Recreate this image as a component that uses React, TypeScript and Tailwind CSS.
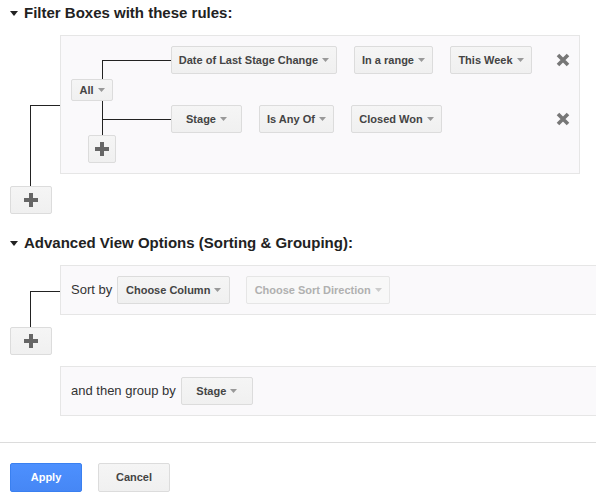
import React from "react";

const FONT = { fontFamily: '"Liberation Sans", Arial, Helvetica, sans-serif' };

function Caret({ color = "#999" }: { color?: string }) {
  return (
    <svg width="7" height="4" viewBox="0 0 7 4" className="shrink-0">
      <path d="M0 0h7L3.5 4z" fill={color} />
    </svg>
  );
}

function Btn({
  className = "",
  children,
  caret = true,
  disabled = false,
}: {
  className?: string;
  children?: React.ReactNode;
  caret?: boolean;
  disabled?: boolean;
}) {
  return (
    <div
      className={
        "flex shrink-0 items-center justify-center gap-[4px] rounded-[2px] border text-[11px] font-bold " +
        (disabled
          ? "border-[#e6e6e6] bg-[#f8f8f8] text-[#b0b0b0] "
          : "border-[#dcdcdc] bg-gradient-to-b from-[#f5f5f5] to-[#f0f0f0] text-[#444] ") +
        className
      }
    >
      {children}
      {caret && <Caret color={disabled ? "#ccc" : "#999"} />}
    </div>
  );
}

function PlusIcon() {
  return (
    <svg width="14" height="14" viewBox="0 0 14 14">
      <path d="M5 0h4v5h5v4H9v5H5V9H0V5h5z" fill="#666" />
    </svg>
  );
}

function XIcon() {
  return (
    <svg width="14" height="14" viewBox="0 0 14 14">
      <path d="M2 2L12 12M12 2L2 12" stroke="#777" strokeWidth="3.6" strokeLinecap="butt" />
    </svg>
  );
}

function Heading({ children }: { children: React.ReactNode }) {
  return (
    <div className="flex h-[20px] items-center pl-[10px] text-[15px] font-bold leading-[20px] text-[#222]">
      <svg width="8" height="5" viewBox="0 0 8 5" className="mr-[6px] mt-[1px]">
        <path d="M0 0h8L4 5z" fill="#222" />
      </svg>
      <span>{children}</span>
    </div>
  );
}

export default function App() {
  return (
    <div className="h-[502px] w-[596px] overflow-hidden bg-white" style={FONT}>
      <div className="pt-[3px]">
        <Heading>Filter Boxes with these rules:</Heading>
      </div>

      {/* Filter section */}
      <div className="mt-[12px] flex items-start pl-[10px]">
        <div className="flex w-[50px] flex-col">
          <div className="h-[70px]" />
          <div className="ml-[20px] h-[81px] border-l border-t border-[#222]" />
          <Btn caret={false} className="h-[28px] w-[42px]">
            <PlusIcon />
          </Btn>
        </div>
        <div className="flex w-[520px] border border-[#e6e6e6] bg-[#faf9fb] p-[10px] pr-[9px]">
          <div className="flex w-[100px] flex-col">
            <div className="h-[14px]" />
            <div className="ml-[31px] h-[19px] border-l border-t border-[#222]" />
            <Btn className="h-[22px] w-[42px]">All</Btn>
            <div className="ml-[31px] h-[18px] border-l border-[#222]" />
            <div className="ml-[31px] h-[16px] border-l border-t border-[#222]" />
            <Btn caret={false} className="ml-[17px] h-[28px] w-[28px]">
              <PlusIcon />
            </Btn>
          </div>
          <div className="flex flex-1 flex-col gap-[31px]">
            <div className="flex items-center">
              <Btn className="h-[28px] w-[166px]">Date of Last Stage Change</Btn>
              <Btn className="ml-[17px] h-[28px] w-[79px]">In a range</Btn>
              <Btn className="ml-[17px] h-[28px] w-[82px]">This Week</Btn>
              <div className="ml-auto flex h-[28px] items-center">
                <XIcon />
              </div>
            </div>
            <div className="flex items-center">
              <Btn className="h-[28px] w-[71px]">Stage</Btn>
              <Btn className="ml-[17px] h-[28px] w-[75px]">Is Any Of</Btn>
              <Btn className="ml-[17px] h-[28px] w-[91px]">Closed Won</Btn>
              <div className="ml-auto flex h-[28px] items-center">
                <XIcon />
              </div>
            </div>
          </div>
        </div>
      </div>

      <div className="mt-[19px]">
        <Heading>Advanced View Options (Sorting &amp; Grouping):</Heading>
      </div>

      {/* Sort section */}
      <div className="mt-[12px] flex items-start pl-[10px]">
        <div className="flex w-[50px] shrink-0 flex-col">
          <div className="h-[26px]" />
          <div className="ml-[20px] h-[36px] border-l border-t border-[#222]" />
          <Btn caret={false} className="h-[28px] w-[42px]">
            <PlusIcon />
          </Btn>
        </div>
        <div className="flex flex-1 items-center border-y border-l border-[#e6e6e6] bg-[#faf9fb] px-[10px] py-[10px]">
          <span className="text-[13px] text-[#333]">Sort by</span>
          <Btn className="ml-[5px] h-[28px] w-[113px]">Choose Column</Btn>
          <Btn disabled className="ml-[16px] h-[28px] w-[144px]">
            Choose Sort Direction
          </Btn>
        </div>
      </div>

      <div className="ml-[60px] mt-[11px] flex items-center border-y border-l border-[#e6e6e6] bg-[#faf9fb] px-[10px] py-[10px]">
        <span className="text-[13px] text-[#333]">and then group by</span>
        <Btn className="ml-[5px] h-[28px] w-[72px]">Stage</Btn>
      </div>

      <div className="mt-[26px] border-t border-[#dcdcdc]" />

      <div className="mt-[20px] flex gap-[16px] pl-[10px]">
        <div className="flex h-[29px] w-[72px] items-center justify-center rounded-[2px] border border-[#3a80f0] bg-gradient-to-b from-[#4d90fe] to-[#4687f5] text-[11px] font-bold text-white">
          Apply
        </div>
        <div className="flex h-[29px] w-[72px] items-center justify-center rounded-[2px] border border-[#dcdcdc] bg-gradient-to-b from-[#f5f5f5] to-[#f0f0f0] text-[11px] font-bold text-[#444]">
          Cancel
        </div>
      </div>
    </div>
  );
}
